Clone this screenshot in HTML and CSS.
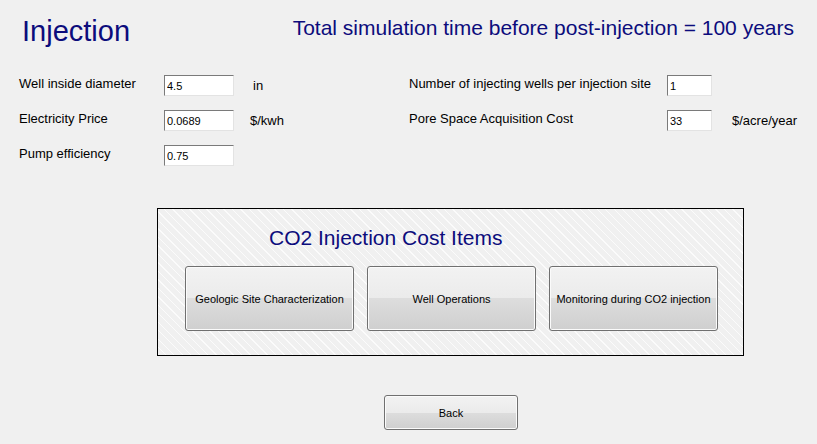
FILE: index.html
```html
<!DOCTYPE html>
<html lang="en">
<head>
  <meta charset="UTF-8">
  <title>Injection</title>
  <link rel="stylesheet" href="styles.css">
</head>
<body>
  <div class="header">
    <h1 class="title">Injection</h1>
    <div class="sim-time">Total simulation time before post-injection = 100 years</div>
  </div>
  <div class="params">
    <div class="col col-left">
      <div class="row">
        <label class="lbl">Well inside diameter</label>
        <input class="field" type="text" value="4.5" />
        <span class="unit unit-in">in</span>
      </div>
      <div class="row">
        <label class="lbl">Electricity Price</label>
        <input class="field" type="text" value="0.0689" />
        <span class="unit">$/kwh</span>
      </div>
      <div class="row">
        <label class="lbl">Pump efficiency</label>
        <input class="field" type="text" value="0.75" />
      </div>
    </div>
    <div class="col col-right">
      <div class="row">
        <label class="lbl">Number of injecting wells per injection site</label>
        <input class="field" type="text" value="1" />
      </div>
      <div class="row">
        <label class="lbl">Pore Space Acquisition Cost</label>
        <input class="field" type="text" value="33" />
        <span class="unit">$/acre/year</span>
      </div>
    </div>
  </div>
  <div class="cost-box">
    <div class="cost-title">CO2 Injection Cost Items</div>
    <div class="cost-buttons">
      <button class="btn cost-btn">Geologic Site Characterization</button>
      <button class="btn cost-btn">Well Operations</button>
      <button class="btn cost-btn">Monitoring during CO2 injection</button>
    </div>
  </div>
  <div class="footer">
    <button class="btn back-btn">Back</button>
  </div>
</body>
</html>
```

FILE: styles.css
```css
body {
  font-family: 'Liberation Sans', Arial, sans-serif;
  margin: 0;
  padding: 0;
  background: #f0f0f0;
  color: #000;
  width: 817px;
  height: 444px;
  overflow: hidden;
}
.header {
  display: flex;
  justify-content: space-between;
  align-items: flex-start;
  padding: 17px 23px 0 22px;
}
.title {
  margin: 0;
  font-size: 29px;
  line-height: 29px;
  font-weight: normal;
  color: #0c0c7c;
}
.sim-time {
  font-size: 21px;
  line-height: 21px;
  color: #0c0c7c;
}
.params {
  display: flex;
  margin-top: 29px;
  padding-left: 19px;
}
.col {
  display: flex;
  flex-direction: column;
  gap: 14px;
}
.col-left {
  width: 390px;
}
.row {
  display: flex;
  align-items: flex-start;
  height: 21px;
}
.lbl {
  font-size: 13px;
  line-height: 17px;
}
.col-left .lbl {
  width: 145px;
}
.col-right .lbl {
  width: 258px;
}
.field {
  width: 70px;
  height: 21px;
  box-sizing: border-box;
  margin: 0;
  padding: 0 2px;
  border: 1px solid;
  border-color: #7a7a7a #e3e3e3 #e3e3e3 #7a7a7a;
  background: #fff;
  font-family: 'Liberation Sans', Arial, sans-serif;
  font-size: 11px;
  color: #000;
  outline: none;
}
.col-right .field {
  width: 45px;
}
.unit {
  font-size: 13px;
  line-height: 22px;
  margin-left: 16px;
}
.unit-in {
  margin-left: 19px;
}
.col-right .unit {
  margin-left: 20px;
}
.cost-box {
  margin: 42px 0 0 157px;
  width: 587px;
  height: 148px;
  box-sizing: border-box;
  border: 1px solid #000;
  padding: 18px 0 0 27px;
  background: repeating-linear-gradient(45deg, #f0f0f0 0, #f0f0f0 5px, #fbfbfb 5px, #fbfbfb 6px);
}
.cost-title {
  margin: 0 0 18px 84px;
  font-size: 21px;
  line-height: 21px;
  color: #0c0c7c;
}
.cost-buttons {
  display: flex;
  gap: 13px;
}
.btn {
  border: 1px solid #707070;
  border-radius: 3px;
  background: linear-gradient(#f2f2f2, #ebebeb 50%, #dddddd 50%, #cfcfcf);
  box-shadow: inset 0 0 0 1px #fbfbfb;
  font-family: 'Liberation Sans', Arial, sans-serif;
  font-size: 11px;
  color: #000;
  padding: 0;
  cursor: pointer;
}
.cost-btn {
  width: 169px;
  height: 65px;
}
.footer {
  padding: 39px 0 0 384px;
}
.back-btn {
  width: 134px;
  height: 35px;
}
```
